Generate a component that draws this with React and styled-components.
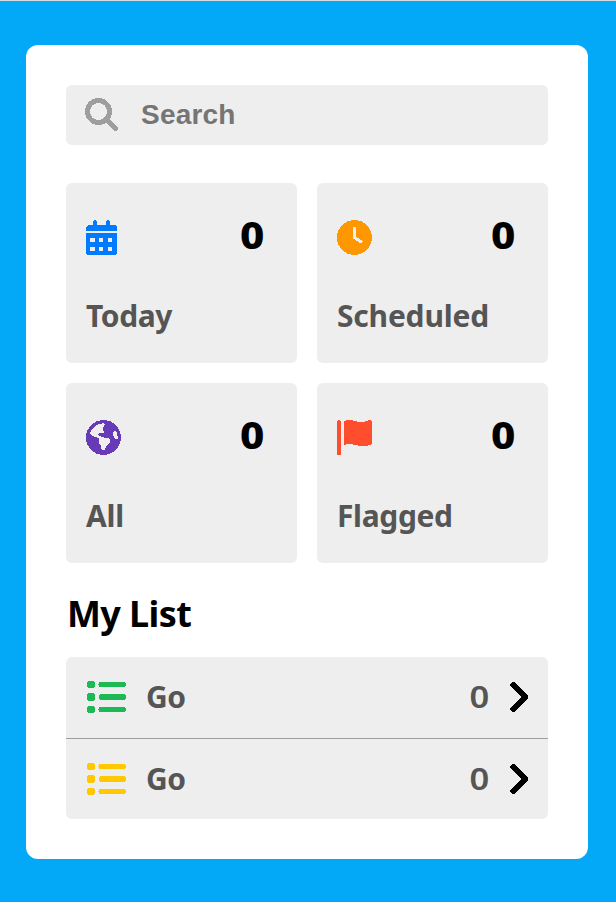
import React from "react";
import styled, { createGlobalStyle } from "styled-components";
import { FaClock, FaEarthAmericas } from "react-icons/fa6";

const GlobalStyle = createGlobalStyle`
  * { box-sizing: border-box; }
  body {
    margin: 0;
    background: #03a9f7;
    font-family: "Noto Sans", "Open Sans", sans-serif;
  }
  svg { shape-rendering: crispEdges; display: block; flex: none; }
`;

const Page = styled.main`
  height: 902px;
  padding: 44px 28px 0 26px;
  background: #03a9f7;
  border-top: 1px solid #d3dde3;
`;

const Panel = styled.section`
  height: 814px;
  padding: 40px;
  background: #fff;
  border-radius: 12px;
`;

const SearchBar = styled.label`
  display: flex;
  align-items: center;
  gap: 23px;
  height: 60px;
  padding: 0 19px;
  margin-bottom: 38px;
  border-radius: 6px;
  background: #eee;
  color: #9e9e9e;
`;

const SearchInput = styled.input`
  flex: 1;
  min-width: 0;
  padding: 0;
  border: 0;
  outline: 0;
  background: transparent;
  font: 700 28px "Liberation Sans", Arial, sans-serif;
  letter-spacing: 0.2px;
  &::placeholder { color: #757575; opacity: 1; }
`;

const Cards = styled.div`
  display: grid;
  grid-template-columns: 1fr 1fr;
  grid-auto-rows: 180px;
  gap: 20px;
`;

const Card = styled.article`
  display: flex;
  flex-direction: column;
  justify-content: space-between;
  padding: 31px 33px 27px 20px;
  border-radius: 6px;
  background: #eee;
`;

const CardTop = styled.div`
  display: flex;
  justify-content: space-between;
  align-items: center;
  height: 47px;
  color: ${(p) => p.$color};
`;

const Total = styled.span`
  color: #000;
  font-size: 37px;
  font-weight: 800;
  line-height: 42px;
  margin-top: -6px;
  transform: scaleX(1.14);
  transform-origin: right;
`;

const Label = styled.span`
  color: #555;
  font-size: 30px;
  font-weight: 700;
  line-height: 40px;
  letter-spacing: ${(p) => p.$spacing || 0}px;
  white-space: nowrap;
`;

const Heading = styled.h2`
  margin: 22px 0 14px 1px;
  height: 58px;
  font-size: 36px;
  font-weight: 700;
  line-height: 58px;
  letter-spacing: -0.6px;
  color: #000;
`;

const Lists = styled.div`
  border-radius: 6px;
  background: #eee;
`;

const Row = styled.div`
  display: flex;
  align-items: center;
  height: ${(p) => (p.$divided ? 82 : 80)}px;
  padding: 0 19px ${(p) => (p.$divided ? 1 : 0)}px 20px;
  border-bottom: ${(p) => (p.$divided ? "1px solid #9e9e9e" : "0")};
  color: ${(p) => p.$color};
`;

const RowName = styled(Label)`
  flex: 1;
  margin: -1px 0 0 20px;
`;

const RowCount = styled.span`
  color: #555;
  font-size: 30px;
  font-weight: 600;
  line-height: 40px;
  margin: 0 21px 0 0;
  transform: scaleX(1.15);
  transform-origin: right;
`;

const SearchIcon = () => (
  <svg width="33" height="35" viewBox="0 0 33 35" fill="none" stroke="currentColor" strokeLinecap="round">
    <circle cx="13.5" cy="13.5" r="11" strokeWidth="5" />
    <path d="M22 22L30.5 30.5" strokeWidth="5" />
  </svg>
);

const CalendarIcon = () => (
  <svg width="31" height="35" viewBox="0 0 31 35" fill="currentColor">
    <path
      fillRule="evenodd"
      d="M7 6V1.5L8 0h2l1 1.5V5h9V1.5L21 0h2l1 1.5V5h5l2 2v4H0V7l2-2h5zM0 13h31v20l-1 2H1l-1-2zM4 18v4h5v-4zM13 18v4h4v-4zM22 18v4h4v-4zM4 27v4h5v-4zM13 27v4h4v-4zM22 27v4h4v-4z"
    />
  </svg>
);

const FlagIcon = () => (
  <svg width="35" height="35" viewBox="0 0 512 512" fill="currentColor">
    <path d="M64 496C64 504.8 56.75 512 48 512h-32C7.25 512 0 504.8 0 496V32c0-17.75 14.25-32 32-32s32 14.25 32 32V496zM476.3 0c-6.365 0-13.01 1.35-19.34 4.233c-45.69 20.86-79.56 27.94-107.8 27.94c-59.96 0-94.81-31.86-163.9-31.87C160.9 .3055 131.6 4.867 96 15.75v350.5c32-9.984 59.87-14.1 84.85-14.1c73.63 0 124.9 31.78 198.6 31.78c31.91 0 68.02-5.971 111.1-23.09C504.1 355.9 512 344.4 512 332.1V30.73C512 11.1 495.3 0 476.3 0z" />
  </svg>
);

const ListIcon = () => (
  <svg width="40" height="40" viewBox="0 0 40 40" fill="currentColor">
    <rect x="1" y="4" width="8" height="7" rx="2.6" />
    <rect x="1" y="16" width="8" height="8" rx="2.6" />
    <rect x="1" y="29" width="8" height="7" rx="2.6" />
    <rect x="12.5" y="5" width="27.5" height="5" rx="2.5" />
    <rect x="13" y="17" width="27" height="6" rx="3" />
    <rect x="12.5" y="30" width="27.5" height="5" rx="2.5" />
  </svg>
);

const ChevronIcon = () => (
  <svg width="19" height="30" viewBox="0 0 19 30" fill="none" stroke="#000">
    <path d="M3.2 2.8L15.4 15L3.2 27.2" strokeWidth="5.6" strokeLinecap="round" strokeLinejoin="round" />
  </svg>
);

const cards = [
  { name: "Today", color: "#007bff", icon: <CalendarIcon />, spacing: -0.4 },
  { name: "Scheduled", color: "#ff9800", icon: <FaClock size={35} />, spacing: -0.2 },
  { name: "All", color: "#673ab7", icon: <FaEarthAmericas size={35} />, spacing: -0.2 },
  { name: "Flagged", color: "#ff4d2d", icon: <FlagIcon />, spacing: -0.35 },
];

const lists = [
  { id: 1, name: "Go", color: "#1db954" },
  { id: 2, name: "Go", color: "#ffc800" },
];

export default function App() {
  return (
    <>
      <GlobalStyle />
      <Page>
        <Panel>
          <SearchBar>
            <SearchIcon />
            <SearchInput placeholder="Search" />
          </SearchBar>
          <Cards>
            {cards.map((c) => (
              <Card key={c.name}>
                <CardTop $color={c.color}>
                  {c.icon}
                  <Total>0</Total>
                </CardTop>
                <Label $spacing={c.spacing}>{c.name}</Label>
              </Card>
            ))}
          </Cards>
          <Heading>My List</Heading>
          <Lists>
            {lists.map((l, i) => (
              <Row key={l.id} $color={l.color} $divided={i < lists.length - 1}>
                <ListIcon />
                <RowName $spacing={-0.4}>{l.name}</RowName>
                <RowCount>0</RowCount>
                <ChevronIcon />
              </Row>
            ))}
          </Lists>
        </Panel>
      </Page>
    </>
  );
}
